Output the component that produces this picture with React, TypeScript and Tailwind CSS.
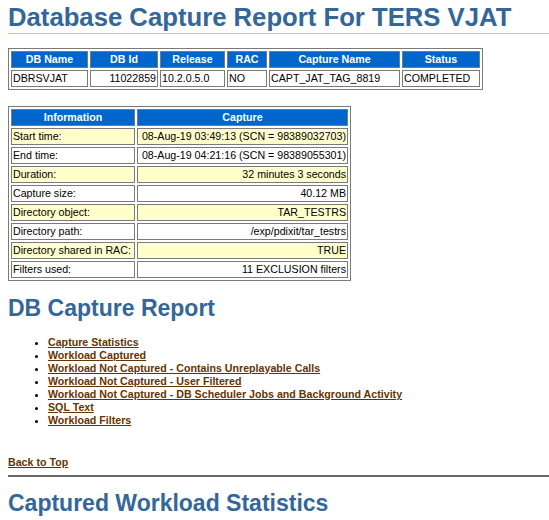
import React from "react";

interface InfoRow {
  label: string;
  value: string;
  shaded: boolean;
}

const infoRows: InfoRow[] = [
  { label: "Start time:", value: "08-Aug-19 03:49:13 (SCN = 98389032703)", shaded: true },
  { label: "End time:", value: "08-Aug-19 04:21:16 (SCN = 98389055301)", shaded: false },
  { label: "Duration:", value: "32 minutes 3 seconds", shaded: true },
  { label: "Capture size:", value: "40.12 MB", shaded: false },
  { label: "Directory object:", value: "TAR_TESTRS", shaded: true },
  { label: "Directory path:", value: "/exp/pdixit/tar_testrs", shaded: false },
  { label: "Directory shared in RAC:", value: "TRUE", shaded: true },
  { label: "Filters used:", value: "11 EXCLUSION filters", shaded: false },
];

const links = [
  "Capture Statistics",
  "Workload Captured",
  "Workload Not Captured - Contains Unreplayable Calls",
  "Workload Not Captured - User Filtered",
  "Workload Not Captured - DB Scheduler Jobs and Background Activity",
  "SQL Text",
  "Workload Filters",
];

const th = "border border-[#7a7a7a] bg-[#0066cc] p-px text-center font-bold text-white";
const td = "border border-[#7a7a7a] p-px text-black";

export default function App() {
  return (
    <div className="min-h-[520px] overflow-hidden bg-white pl-2 font-['Liberation_Sans',Arial,sans-serif]">
      {/* TITLE */}
      <h1 className="mt-[2px] border-b border-[#cccc99] text-[25.7px] font-bold leading-[31px] text-[#336699]">
        Database Capture Report For TERS VJAT
      </h1>

      {/* SUMMARY TABLE */}
      <table className="mt-[14px] border-separate border-spacing-[2px] border border-[#7a7a7a] text-[10.67px] leading-[13px]">
        <thead>
          <tr>
            <th className={`${th} w-[77px]`}>DB Name</th>
            <th className={`${th} w-[68px]`}>DB Id</th>
            <th className={`${th} w-[65px]`}>Release</th>
            <th className={`${th} w-[40px]`}>RAC</th>
            <th className={`${th} w-[131px]`}>Capture Name</th>
            <th className={`${th} w-[78px]`}>Status</th>
          </tr>
        </thead>
        <tbody>
          <tr>
            <td className={`${td} text-left`}>DBRSVJAT</td>
            <td className={`${td} text-right`}>11022859</td>
            <td className={`${td} text-left`}>10.2.0.5.0</td>
            <td className={`${td} text-left`}>NO</td>
            <td className={`${td} text-left`}>CAPT_JAT_TAG_8819</td>
            <td className={`${td} text-left`}>COMPLETED</td>
          </tr>
        </tbody>
      </table>

      {/* CAPTURE INFO TABLE */}
      <table className="mt-[16px] border-separate border-spacing-[2px] border border-[#7a7a7a] text-[10.67px] leading-[13px]">
        <thead>
          <tr>
            <th className={`${th} w-[124px]`}>Information</th>
            <th className={`${th} w-[211px]`}>Capture</th>
          </tr>
        </thead>
        <tbody>
          {infoRows.map((row) => (
            <tr key={row.label}>
              <td className={`${td} whitespace-nowrap text-left ${row.shaded ? "bg-[#ffffcc]" : "bg-white"}`}>
                {row.label}
              </td>
              <td className={`${td} whitespace-nowrap text-right ${row.shaded ? "bg-[#ffffcc]" : "bg-white"}`}>
                {row.value}
              </td>
            </tr>
          ))}
        </tbody>
      </table>

      {/* REPORT INDEX */}
      <h2 className="mt-[14px] text-[23px] font-bold leading-[26px] text-[#336699]">DB Capture Report</h2>
      <ul className="mt-[15px] list-disc pl-10 text-[10.67px] leading-[13px]">
        {links.map((l) => (
          <li key={l}>
            <a href="#" className="font-bold text-[#663300] underline">
              {l}
            </a>
          </li>
        ))}
      </ul>

      <div className="mt-[29px] text-[10.67px] leading-[13px]">
        <a href="#" className="font-bold text-[#663300] underline">
          Back to Top
        </a>
      </div>
      <hr className="mt-[6px] border-t-2 border-[#6a6a6a]" />

      <h2 className="mt-[13px] text-[23px] font-bold leading-[26px] text-[#336699]">
        Captured Workload Statistics
      </h2>
    </div>
  );
}
